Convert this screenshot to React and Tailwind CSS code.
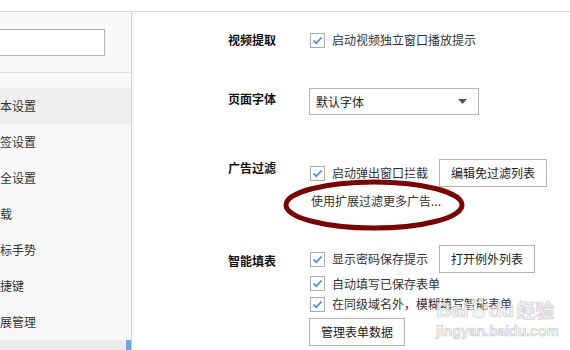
const Check = () => (
  <div className="w-[15px] h-[15px] ml-[1px] border border-[#adadad] bg-white flex items-center justify-center shrink-0">
    <svg width="13" height="13" viewBox="0 0 13 13">
      <path d="M2.5 6.5 L5.3 9.2 L10.5 3.5" fill="none" stroke="#3f8ee3" strokeWidth="1.7" />
    </svg>
  </div>
);

const Btn = ({ children, className = "" }) => (
  <div className={`h-[28px] px-[11px] border border-[#b3b3b3] bg-white text-[#222] flex items-center justify-center ${className}`}>
    {children}
  </div>
);

const navItems = ["基本设置", "标签设置", "安全设置", "下载", "鼠标手势", "快捷键", "扩展管理"];

const App = () => {
  return (
    <div className="relative w-[570px] h-[350px] overflow-hidden bg-white text-[12px] text-[#333] font-['Noto_Sans_CJK_SC','Microsoft_YaHei',sans-serif]">
      <div className="h-[12px] bg-white border-b border-[#dcdcdc]" />
      <div className="flex h-[338px]">
        {/* sidebar */}
        <div className="w-[132px] shrink-0 bg-[#f9f9f9] border-r border-[#d3d3d3] shadow-[1px_0_2px_rgba(0,0,0,0.06)] flex flex-col overflow-hidden">
          <div className="h-[61px] shrink-0 border-b border-[#e3e3e3] flex items-center">
            <div className="-ml-[60px] w-[165px] h-[27px] border border-[#b5b5b5] bg-white flex items-center pl-[11px] text-[#aaa] shrink-0">
              搜索设置
            </div>
          </div>
          <div className="mt-[15px] flex flex-col">
            {navItems.map((item, i) => (
              <div
                key={item}
                className={`h-[36px] shrink-0 flex items-center ${i === 0 ? "bg-[#efefef]" : ""}`}
              >
                <span className="-ml-[12px] whitespace-nowrap">{item}</span>
              </div>
            ))}
            {/* next item, only its top shows */}
            <div className="h-[36px] shrink-0 flex justify-end bg-[#ebebeb]">
              <div className="w-[5px] h-full bg-[#6ea7e8]" />
            </div>
          </div>
        </div>

        {/* main */}
        <div className="flex-1 flex flex-col pl-[96px]">
          <div className="mt-[17px] flex">
            <div className="w-[81px] leading-[22px] font-bold text-[#111]">视频提取</div>
            <div className="h-[22px] flex items-center">
              <Check />
              <span className="ml-[7px]">启动视频独立窗口播放提示</span>
            </div>
          </div>

          <div className="mt-[37px] flex">
            <div className="w-[81px] leading-[22px] font-bold text-[#111]">页面字体</div>
            <div className="w-[170px] h-[27px] border border-[#b5b5b5] flex items-center justify-between pl-[6px] pr-[11px] text-[#222]">
              <span>默认字体</span>
              <svg width="9" height="5" viewBox="0 0 9 5">
                <path d="M0 0 L9 0 L4.5 5 Z" fill="#555" />
              </svg>
            </div>
          </div>

          <div className="mt-[42px] flex">
            <div className="w-[81px] leading-[22px] font-bold text-[#111]">广告过滤</div>
            <div className="flex flex-col">
              <div className="h-[32px] flex items-center">
                <Check />
                <span className="ml-[7px]">启动弹出窗口拦截</span>
                <Btn className="ml-[11px]">编辑免过滤列表</Btn>
              </div>
              <div className="mt-[1px] pl-[2px] leading-[22px]">使用扩展过滤更多广告...</div>
            </div>
          </div>

          <div className="mt-[33px] flex">
            <div className="w-[81px] mt-[5px] leading-[22px] font-bold text-[#111]">智能填表</div>
            <div className="flex flex-col">
              <div className="h-[28px] flex items-center">
                <Check />
                <span className="ml-[7px]">显示密码保存提示</span>
                <Btn className="ml-[11px]">打开例外列表</Btn>
              </div>
              <div className="h-[21px] flex items-center">
                <Check />
                <span className="ml-[7px]">自动填写已保存表单</span>
              </div>
              <div className="h-[20px] flex items-center">
                <Check />
                <span className="ml-[7px] whitespace-nowrap">在同级域名外，模糊填写智能表单</span>
              </div>
              <Btn className="mt-[4px] self-start">管理表单数据</Btn>
            </div>
          </div>
        </div>
      </div>

      {/* annotation ellipse */}
      <svg className="absolute left-[278px] top-[176px] pointer-events-none" width="194" height="58" viewBox="0 0 194 58">
        <ellipse cx="96" cy="29" rx="88" ry="23" fill="none" stroke="#780202" strokeWidth="5" />
      </svg>

      {/* watermark */}
      <div className="absolute left-[436px] top-[294px] flex flex-col pointer-events-none text-[#f3f3f3]/80 [-webkit-text-stroke:0.7px_#cdcdcd] font-['Liberation_Sans',sans-serif] font-bold">
        <div className="flex items-end h-[28px]">
          <span className="text-[21px] leading-[24px]">Bai</span>
          <svg width="20" height="22" viewBox="0 0 20 22" className="mb-[3px]">
            <g fill="#f3f3f3" fillOpacity="0.8" stroke="#cdcdcd" strokeWidth="0.8">
              <ellipse cx="5" cy="5" rx="2.2" ry="3" />
              <ellipse cx="12" cy="4" rx="2.2" ry="3" />
              <ellipse cx="2.5" cy="11" rx="2" ry="2.6" />
              <ellipse cx="16.5" cy="10" rx="2" ry="2.6" />
              <path d="M4 19 C4 14 7 11 10 11 C13 11 16 14 16 19 C16 21 4 21 4 19 Z" />
            </g>
          </svg>
          <span className="text-[21px] leading-[24px]">du</span>
          <span className="ml-[2px] text-[19px] leading-[24px] font-['Noto_Sans_CJK_SC',sans-serif]">经验</span>
        </div>
        <div className="text-[14px] leading-[16px] mt-[1px]">jingyan.baidu.com</div>
      </div>
    </div>
  );
};

export default App;
